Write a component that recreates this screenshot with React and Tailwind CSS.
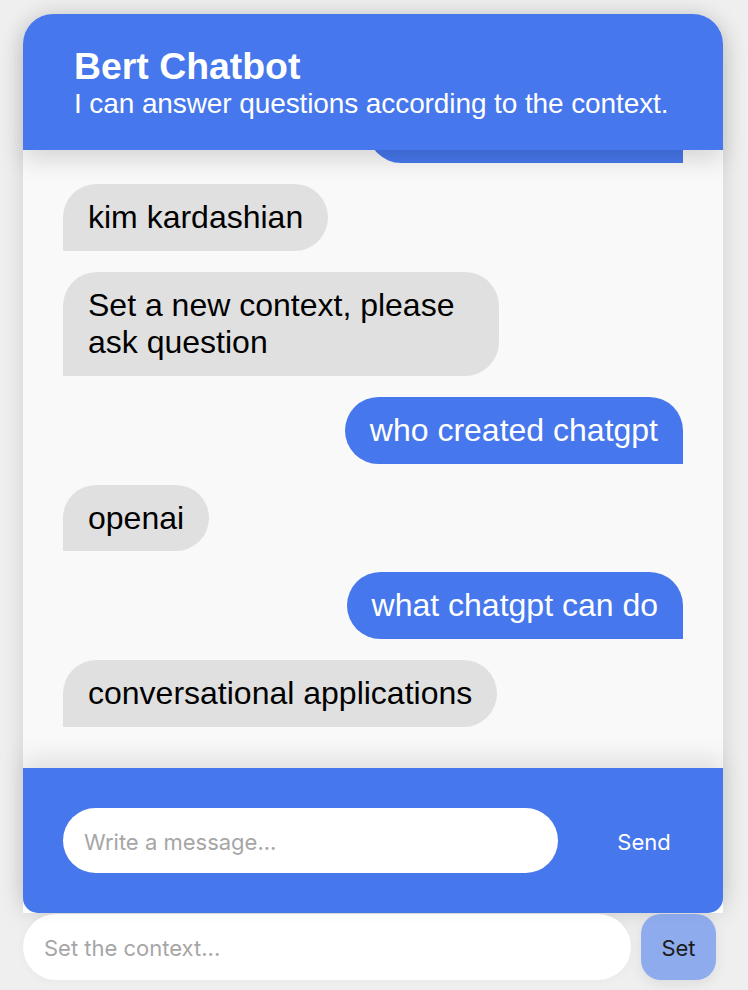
import React from "react";

const messages = [
  { from: "user", text: "who created skims" },
  { from: "bot", text: "kim kardashian" },
  { from: "bot", text: "Set a new context, please ask question" },
  { from: "user", text: "who created chatgpt" },
  { from: "bot", text: "openai" },
  { from: "user", text: "what chatgpt can do" },
  { from: "bot", text: "conversational applications" },
];

const Bubble = ({ from, text }) =>
  from === "user" ? (
    <div className="self-end max-w-[70.4%] bg-[#4677ec] text-white rounded-[34px] rounded-br-none px-[25px] py-[15px] leading-[1.15]">
      {text}
    </div>
  ) : (
    <div className="self-start max-w-[70.4%] bg-[#e0e0e0] text-black rounded-[34px] rounded-bl-none px-[25px] py-[15px] leading-[1.15]">
      {text}
    </div>
  );

export default function App() {
  return (
    <div className="min-h-[990px] bg-[#efefef] pt-[14px] overflow-hidden">
      <div className="ml-[23px] w-[700px] bg-white rounded-t-[30px] shadow-[0_0_24px_rgba(0,0,0,0.12)]">
        <div className="relative z-10 h-[136px] bg-[#4677ec] rounded-t-[30px] pl-[51px] pr-[30px] pt-[31px] text-white font-['Liberation_Sans',Arial,sans-serif] shadow-[0_10px_24px_rgba(0,0,0,0.14)]">
          <h3 className="text-[37.4px] font-bold leading-[1.15]">Bert Chatbot</h3>
          <p className="text-[28px] leading-[1.15] whitespace-nowrap tracking-[-0.1px]">
            I can answer questions according to the context.
          </p>
        </div>

        <div className="h-[618px] bg-[#f9f9f9] overflow-hidden flex flex-col justify-end gap-[21px] px-[40px] pb-[41px] text-[32px] font-['Liberation_Sans',Arial,sans-serif]">
          {messages.map((m, i) => (
            <Bubble key={i} from={m.from} text={m.text} />
          ))}
        </div>

        <div className="relative z-10 h-[145px] bg-[#4677ec] rounded-b-[15px] flex items-center pl-[40px] shadow-[0_-10px_24px_rgba(0,0,0,0.1)] font-['Inter',sans-serif]">
          <input
            className="w-[495px] h-[65px] rounded-full bg-white px-[21px] pt-[3px] text-[22px] outline-none placeholder:text-[#a6a6a6]"
            placeholder="Write a message..."
          />
          <button className="flex-1 pl-[7px] pt-[3px] text-white text-[22px]">Send</button>
        </div>
      </div>

      <div className="ml-[23px] mt-[1px] w-[700px] flex items-center font-['Inter',sans-serif]">
        <input
          className="w-[608px] h-[66px] rounded-full bg-white px-[21px] pt-[2px] text-[22px] outline-none placeholder:text-[#a6a6a6] shadow-[0_0_10px_rgba(0,0,0,0.04)]"
          placeholder="Set the context..."
        />
        <button className="ml-[10px] w-[75px] h-[66px] rounded-[20px] bg-[#8eabee] text-[#1c1c1c] text-[22px] pt-[2px] shadow-[0_4px_14px_rgba(0,0,0,0.08)]">
          Set
        </button>
      </div>
    </div>
  );
}
